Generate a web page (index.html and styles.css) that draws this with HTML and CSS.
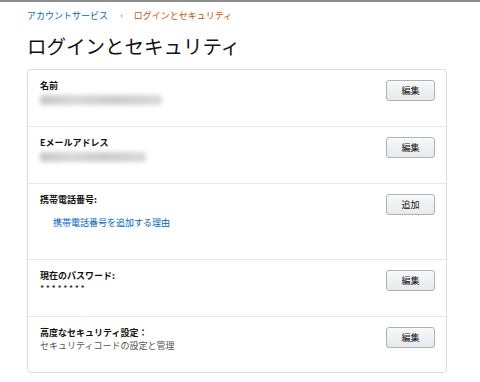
FILE: index.html
```html
<!doctype html>
<html lang="ja">
<head>
<meta charset="utf-8">
<title>ログインとセキュリティ</title>
<link rel="stylesheet" href="styles.css">
</head>
<body>
<div class="page">
  <div class="crumbs">
    <a href="#" class="crumb-link">アカウントサービス</a>
    <span class="crumb-sep">›</span>
    <span class="crumb-here">ログインとセキュリティ</span>
  </div>
  <h1>ログインとセキュリティ</h1>
  <div class="card">
    <div class="row">
      <div class="info">
        <div class="label">名前</div>
        <div class="blur blur-name"></div>
      </div>
      <button class="btn">編集</button>
    </div>
    <div class="row">
      <div class="info">
        <div class="label">Eメールアドレス</div>
        <div class="blur blur-mail"></div>
      </div>
      <button class="btn">編集</button>
    </div>
    <div class="row row-tall">
      <div class="info">
        <div class="label">携帯電話番号:</div>
        <a href="#" class="why">携帯電話番号を追加する理由</a>
      </div>
      <button class="btn">追加</button>
    </div>
    <div class="row">
      <div class="info">
        <div class="label">現在のパスワード:</div>
        <div class="value stars">********</div>
      </div>
      <button class="btn">編集</button>
    </div>
    <div class="row last">
      <div class="info">
        <div class="label">高度なセキュリティ設定：</div>
        <div class="value sub">セキュリティコードの設定と管理</div>
      </div>
      <button class="btn">編集</button>
    </div>
  </div>
</div>
</body>
</html>
```

FILE: styles.css
```css
body {
    margin: 0;
    background: #fff;
    color: #111;
    font-family: "Noto Sans CJK JP", "Liberation Sans", sans-serif;
    border-top: 2px solid #8c8c8c;
}
 .page {
    padding: 7px 0 0 27px;
    width: 420px;
}
 .crumbs {
    font-size: 9px;
    line-height: 14px;
    height: 14px;
}
 .crumb-link {
    color: #0066c0;
    text-decoration: none;
}
 .crumb-sep {
    color: #888;
    margin: 0 9px 0 10px;
}
 .crumb-here {
    color: #c45500;
}
 h1 {
    font-size: 19.5px;
    font-weight: normal;
    line-height: 26px;
    margin: 10px 0 10px;
}
 .card {
    border: 1px solid #ddd;
    border-radius: 4px;
}
 .row {
    display: flex;
    justify-content: space-between;
    align-items: flex-start;
    height: 57px;
    padding: 9px 11px 0 12px;
    box-sizing: border-box;
    border-bottom: 1px solid #e7e7e7;
}
 .row-tall {
    height: 76px;
}
 .row.last {
    border-bottom: 0;
    height: 55px;
}
 .label {
    font-size: 9px;
    font-weight: bold;
    line-height: 13px;
}
 .value {
    font-size: 9px;
    line-height: 13px;
}
 .stars {
    letter-spacing: 1.6px;
}
 .sub {
    color: #555;
}
 .why {
    display: block;
    margin: 10px 0 0 13px;
    font-size: 9px;
    line-height: 13px;
    color: #0066c0;
    text-decoration: none;
}
 .blur {
    height: 10px;
    margin-top: 3px;
    background: linear-gradient(90deg, #c8c8c8, #d8d8d8 30%, #cdcdcd 60%, #dadada);
    border-radius: 3px;
    filter: blur(2px);
}
 .blur-name {
    width: 122px;
}
 .blur-mail {
    width: 106px;
}
 .btn {
    width: 49px;
    height: 21px;
    margin-top: 1px;
    padding: 0;
    font-family: inherit;
    font-size: 9px;
    color: #111;
    background: linear-gradient(#f7f8fa, #e7e9ec);
    border: 1px solid #adb1b8;
    border-radius: 3px;
    box-shadow: 0 1px 0 rgba(255,255,255,.6) inset;
    cursor: pointer;
}
```
